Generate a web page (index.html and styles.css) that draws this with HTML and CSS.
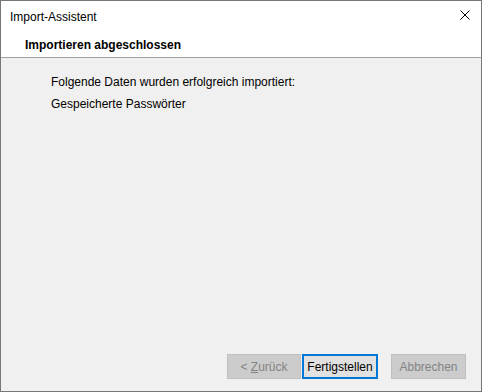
FILE: index.html
```html
<!DOCTYPE html>
<html lang="de">
<head>
    <meta charset="UTF-8">
    <title>Import-Assistent</title>
    <link rel="stylesheet" href="styles.css">
</head>
<body>
    <div class="window">
        <div class="titlebar">
            <span class="title">Import-Assistent</span>
            <svg class="close" width="10" height="10" viewBox="0 0 10 10">
                <path d="M0.5 0.5 L9.5 9.5 M9.5 0.5 L0.5 9.5" stroke="#000" stroke-width="1" fill="none"/>
            </svg>
        </div>
        <div class="header">
            <h1>Importieren abgeschlossen</h1>
        </div>
        <div class="content">
            <p>Folgende Daten wurden erfolgreich importiert:</p>
            <p>Gespeicherte Passwörter</p>
        </div>
        <div class="footer">
            <button class="button back" disabled>&lt; <u>Z</u>urück</button>
            <button class="button primary">Fertigstellen</button>
            <button class="button cancel" disabled>Abbrechen</button>
        </div>
    </div>
</body>
</html>
```

FILE: styles.css
```css
body {
    margin: 0;
    font-family: "Liberation Sans", Arial, sans-serif;
    font-size: 12px;
    color: #000;
    background-color: #fff;
}

.window {
    box-sizing: border-box;
    width: 482px;
    height: 392px;
    border: 1px solid #777;
    display: flex;
    flex-direction: column;
    background-color: #f0f0f0;
}

.titlebar {
    height: 29px;
    background-color: #fff;
    display: flex;
    align-items: center;
    justify-content: space-between;
    padding: 0 11px 0 9px;
}

.title {
    margin-top: 2px;
}

.close {
    margin-top: -1px;
}

.header {
    height: 27px;
    background-color: #fff;
    border-bottom: 1px solid #a0a0a0;
    padding-left: 24px;
    display: flex;
    align-items: center;
}

.header h1 {
    margin: 0;
    font-size: 12px;
    font-weight: bold;
    margin-top: 2px;
}

.content {
    flex: 1;
    padding: 13px 0 0 50px;
}

.content p {
    margin: 0;
    line-height: 22px;
}

.footer {
    display: flex;
    justify-content: flex-end;
    padding: 0 15px 12px 0;
}

.button {
    box-sizing: border-box;
    height: 25px;
    width: 75px;
    font-family: inherit;
    font-size: 12px;
    padding: 0;
    border: 1px solid #adadad;
    background-color: #e1e1e1;
    color: #000;
}

.button:disabled {
    background-color: #cccccc;
    border-color: #bfbfbf;
    color: #838383;
}

.back {
    width: 74px;
    margin-right: 1px;
}

.primary {
    width: 76px;
    border: 2px solid #0078d7;
    margin-right: 13px;
}
```
